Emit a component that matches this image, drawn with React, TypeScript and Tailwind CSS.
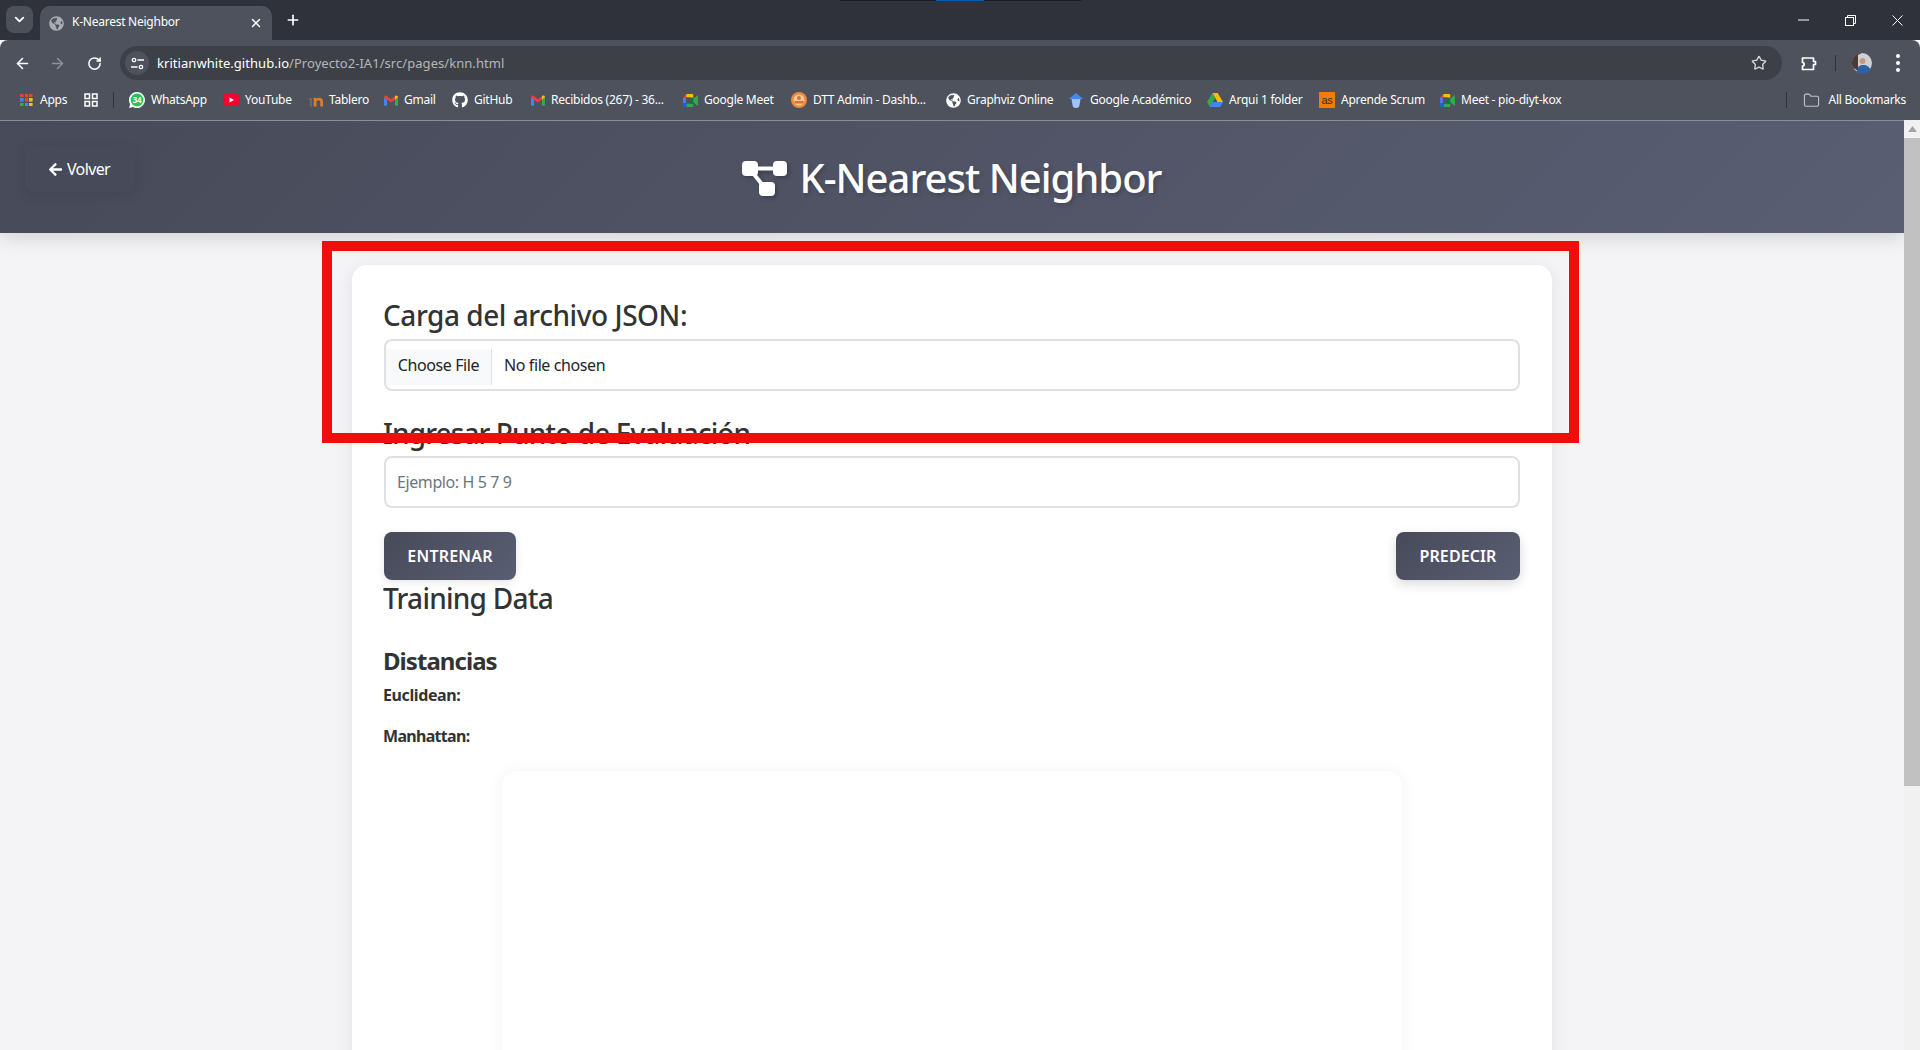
import { ArrowLeft, ArrowRight, ChevronDown, Folder, Plus, RotateCw, Star, X } from "lucide-react";
import { FaArrowLeft, FaGithub, FaGlobeAmericas } from "react-icons/fa";
import type { ReactNode } from "react";

const UI_FONT = "font-['Noto_Sans','Open_Sans',sans-serif]";

function AppsIcon() {
  const colors = ["#ea4335", "#ea4335", "#ea4335", "#4285f4", "#ea4335", "#fbbc04", "#34a853", "#4285f4", "#fbbc04"];
  return (
    <div className="grid grid-cols-3 gap-[1px] w-[13px] h-[13px]">
      {colors.map((c, i) => (
        <svg key={i} viewBox="0 0 3 3" className="w-[3.6px] h-[3.6px]">
          <rect width="3" height="3" fill={c} />
        </svg>
      ))}
    </div>
  );
}

function GridIcon() {
  return (
    <svg viewBox="0 0 14 14" className="w-[14px] h-[14px]" fill="none" stroke="#fff" strokeWidth="1.5">
      <rect x="1" y="1" width="4.5" height="4.5" />
      <rect x="8.5" y="1" width="4.5" height="4.5" />
      <rect x="1" y="8.5" width="4.5" height="4.5" />
      <rect x="8.5" y="8.5" width="4.5" height="4.5" />
    </svg>
  );
}

function WhatsAppIcon() {
  return (
    <div className="relative w-4 h-4">
      <svg viewBox="0 0 16 16" className="w-4 h-4">
        <path d="M8 0a8 8 0 0 0-6.8 12.2L0 16l3.9-1.1A8 8 0 1 0 8 0z" fill="#fff" />
        <circle cx="8" cy="8" r="6.4" fill="#25c35a" />
      </svg>
      <span className="absolute inset-0 flex items-center justify-center text-[8px] leading-none font-bold text-white">34</span>
    </div>
  );
}

function YouTubeIcon() {
  return (
    <svg viewBox="0 0 16 12" className="w-4 h-3">
      <rect width="16" height="12" rx="3" fill="#f8002f" />
      <path d="M6.5 3.5v5L11 6z" fill="#fff" />
    </svg>
  );
}

function TableroIcon() {
  return (
    <svg viewBox="0 0 15 13" className="w-[14px] h-[13px]">
      <path d="M0 4h3.500v2H3v7H1V6H0z" fill="#7a6a58" />
      <path d="M5 13V3.500h2.600v1.200C9.500 2.700 15 3 15 7.500V13h-3V8c0-2-4-2-4 0v5z" fill="#e07b28" />
    </svg>
  );
}

function GmailIcon() {
  return (
    <svg viewBox="0 0 16 12" className="w-[14px] h-[11px]">
      <path d="M0 2v9a1 1 0 0 0 1 1h2.500V5z" fill="#4285f4" />
      <path d="M16 2v9a1 1 0 0 1-1 1h-2.500V5z" fill="#34a853" />
      <path d="M0 2 3.500 5 8 8.400V4.500L3 .6C1.700-.4 0 .4 0 2z" fill="#ea4335" />
      <path d="M8 4.500v3.900L12.500 5V1z" fill="#ea4335" />
      <path d="M12.500 1v4L16 2.300C16 .4 14.300-.4 13 .6z" fill="#fbbc04" />
    </svg>
  );
}

function MeetIcon() {
  return (
    <svg viewBox="0 0 16 14" className="w-[15px] h-[13px]">
      <path d="M4 0h6a1 1 0 0 1 1 1v3H8V3.500H3V1z" fill="#fbbc04" />
      <path d="M3.500 0v4H0z" fill="#ea4335" />
      <path d="M0 4h3v6H0z" fill="#4285f4" />
      <path d="M0 10h3v1h1v3H2a2 2 0 0 1-2-2z" fill="#1967d2" />
      <path d="M4 10.500h7V13a1 1 0 0 1-1 1H4z" fill="#34a853" />
      <path d="M8 4h3v6.500H8z" fill="#00832d" />
      <path d="M11 5l5-4v12l-5-4z" fill="#34a853" />
    </svg>
  );
}

function DttIcon() {
  return (
    <svg viewBox="0 0 16 16" className="w-4 h-4">
      <circle cx="8" cy="8" r="8" fill="#ee8a3a" />
      <circle cx="8" cy="8" r="5.500" fill="#f7c9a0" />
      <circle cx="8" cy="6" r="2" fill="#d9752a" />
      <rect x="3.500" y="9" width="9" height="2.500" fill="#d9752a" />
    </svg>
  );
}

function ScholarIcon() {
  return (
    <svg viewBox="0 0 16 16" className="w-4 h-4">
      <path d="M8 1 0.500 7h15z" fill="#4285f4" />
      <path d="M3.500 7h9L11.500 13a3.500 3 0 0 1-7 0z" fill="#a0c3ff" />
    </svg>
  );
}

function DriveIcon() {
  return (
    <svg viewBox="0 0 16 14" className="w-4 h-[14px]">
      <path d="M5.300 0h5.400l5.300 9h-5.400z" fill="#fbbc04" />
      <path d="M5.300 0 0 9l2.700 5 5.300-9z" fill="#34a853" />
      <path d="M2.700 14 5.300 9H16l-2.700 5z" fill="#4285f4" />
    </svg>
  );
}

function AsIcon() {
  return (
    <div className="w-4 h-4 bg-[#f57c00] flex items-center justify-center text-[11px] leading-none text-[#3a2a18] font-['Liberation_Sans',sans-serif]">
      as
    </div>
  );
}

function DiagramIcon() {
  return (
    <svg viewBox="0 0 45 35" className="w-[45px] h-[35px] drop-shadow-[2px_2px_2px_rgba(0,0,0,0.25)]" fill="#fff">
      <rect x="0" y="0" width="16" height="15" rx="4" />
      <rect x="31" y="0" width="14" height="15" rx="4" />
      <rect x="17" y="21" width="16" height="14" rx="4" />
      <path d="M15 5.500h17v4H15z" />
      <path d="M8.500 12l3.500-2 11 14-3.500 2z" />
    </svg>
  );
}

function Avatar() {
  return (
    <svg viewBox="0 0 20 20" className="w-5 h-5">
      <circle cx="10" cy="10" r="10" fill="#cfd1d5" />
      <path d="M10 0a10 10 0 0 0-9 14.500L6 18V2z" fill="#4b3a38" />
      <circle cx="10.500" cy="8" r="3" fill="#c79a80" />
      <path d="M5 20c0-6 2-8 6-8s7 2 7 5a10 10 0 0 1-13 3z" fill="#2b62a8" />
    </svg>
  );
}

const BOOKMARKS: { icon: ReactNode; label: string; box: string; text: string }[] = [
  { icon: <YouTubeIcon />, label: "YouTube", box: "w-4", text: "w-[47px]" },
  { icon: <TableroIcon />, label: "Tablero", box: "w-[14px]", text: "w-[38px]" },
  { icon: <GmailIcon />, label: "Gmail", box: "w-[14px]", text: "w-[31px]" },
  { icon: <FaGithub className="text-white text-base" />, label: "GitHub", box: "w-4", text: "w-[40px]" },
  { icon: <GmailIcon />, label: "Recibidos (267) - 36...", box: "w-[14px]", text: "w-[115px]" },
  { icon: <MeetIcon />, label: "Google Meet", box: "w-[15px]", text: "w-[70px]" },
  { icon: <DttIcon />, label: "DTT Admin - Dashb...", box: "w-4", text: "w-[115px]" },
  { icon: <FaGlobeAmericas className="text-white text-[15px]" />, label: "Graphviz Online", box: "w-4", text: "w-[84px]" },
  { icon: <ScholarIcon />, label: "Google Académico", box: "w-4", text: "w-[100px]" },
  { icon: <DriveIcon />, label: "Arqui 1 folder", box: "w-4", text: "w-[73px]" },
  { icon: <AsIcon />, label: "Aprende Scrum", box: "w-4", text: "w-[82px]" },
  { icon: <MeetIcon />, label: "Meet - pio-diyt-kox", box: "w-[15px]", text: "w-[105px]" },
];

function BrowserChrome() {
  return (
    <div className={`shrink-0 ${UI_FONT}`}>
      {/* tabs */}
      <div className="relative h-10 bg-[#2f323b] flex items-end pl-[6px]">
        <div className="mb-[7px] w-[27px] h-[27px] rounded-lg bg-[#4b5059] flex items-center justify-center">
          <ChevronDown size={15} strokeWidth={3} className="text-white" />
        </div>
        <div className="ml-[7px] w-[232px] h-[34px] rounded-t-[10px] bg-[#4d525c] flex items-center pl-[9px] pr-[9px]">
          <FaGlobeAmericas className="text-[#a9adb5] text-[15px] shrink-0" />
          <span className="ml-[8px] mb-[2px] flex-1 text-[12px] tracking-[-0.25px] text-white whitespace-nowrap">K-Nearest Neighbor</span>
          <X size={14} strokeWidth={2.5} className="text-white" />
        </div>
        <Plus size={16} strokeWidth={2.5} className="ml-[13px] mb-[12px] text-white" />
        <div className="flex-1" />
        <div className="flex items-center h-10 self-start -mr-px">
          <div className="w-[47px] flex justify-center">
            <svg width="11" height="2" viewBox="0 0 11 2">
              <path d="M0 1h11" stroke="#fff" strokeWidth="1" />
            </svg>
          </div>
          <div className="w-[47px] flex justify-center">
            <svg width="11" height="11" viewBox="0 0 11 11" fill="none" stroke="#fff">
              <rect x="0.500" y="2.500" width="8" height="8" />
              <path d="M2.500 2.500V.5h8v8H8.500" />
            </svg>
          </div>
          <div className="w-[47px] flex justify-center">
            <svg width="11" height="11" viewBox="0 0 11 11" fill="none" stroke="#fff">
              <path d="M.5.500l10 10M10.500.5l-10 10" />
            </svg>
          </div>
        </div>
        <div className="absolute top-0 left-[840px] w-[241px] h-px bg-[#1c1d21]">
          <div className="ml-[96px] w-[48px] h-px bg-[#0b5cad]" />
        </div>
      </div>

      {/* address bar */}
      <div className="h-10 bg-[#4d525c] flex items-end rounded-t-lg">
        <div className="w-[120px] h-[34px] flex items-center pl-[14px] gap-[18px] text-white">
          <ArrowLeft size={17} strokeWidth={2.2} />
          <ArrowRight size={17} strokeWidth={2.2} className="text-[#8d9098]" />
          <RotateCw size={15} strokeWidth={2.4} className="ml-[3px]" />
        </div>
        <div className="w-[1662px] h-[34px] rounded-full bg-[#3d4047] flex items-center pl-[5px] pr-[15px]">
          <div className="w-6 h-6 rounded-full bg-[#4d525c] flex items-center justify-center">
            <svg width="13" height="13" viewBox="0 0 13 13" fill="none" stroke="#fff" strokeWidth="1.300">
              <circle cx="3" cy="3" r="1.700" />
              <path d="M6.500 3H13M0 10h6.500" />
              <circle cx="10" cy="10" r="1.700" />
            </svg>
          </div>
          <span className="ml-2 pt-px text-[13px] tracking-[0.05px] text-white whitespace-nowrap">
            kritianwhite.github.io<span className="text-[#b4b7bd]">/Proyecto2-IA1/src/pages/knn.html</span>
          </span>
          <div className="flex-1" />
          <Star size={16} strokeWidth={2} className="text-[#d5d7da]" />
        </div>
        <div className="flex-1 h-[34px] flex items-center pl-[19px] text-white">
          <svg width="16" height="16" viewBox="0 0 16 16" fill="none" stroke="#fff" strokeWidth="1.700">
            <path d="M1.500 3h11v3.500h2v3h-2V14.500h-11V11c2.200 0 2.200-3.500 0-3.500z" strokeLinejoin="round" />
          </svg>
          <div className="ml-[18px] w-px h-4 bg-[#2f323b]" />
          <div className="ml-[16px]">
            <Avatar />
          </div>
          <div className="ml-[24px] flex flex-col gap-[3px]">
            <div className="w-[4px] h-[4px] rounded-full bg-white" />
            <div className="w-[4px] h-[4px] rounded-full bg-white" />
            <div className="w-[4px] h-[4px] rounded-full bg-white" />
          </div>
        </div>
      </div>

      {/* bookmarks */}
      <div className="h-10 bg-[#4d525c] flex items-center pl-[20px] text-[12px] tracking-[-0.25px] text-white whitespace-nowrap">
        <AppsIcon />
        <span className="ml-[7px] w-[27px]">Apps</span>
        <div className="ml-[17px]">
          <GridIcon />
        </div>
        <div className="ml-[15px] w-px h-4 bg-[#2f323b]" />
        <div className="ml-[15px] flex items-center">
          <WhatsAppIcon />
          <span className="ml-[6px] w-[55px]">WhatsApp</span>
        </div>
        {BOOKMARKS.map((b) => (
          <div key={b.label} className="ml-[17px] flex items-center">
            <div className={`${b.box} flex justify-center`}>{b.icon}</div>
            <span className={`ml-[6px] ${b.text}`}>{b.label}</span>
          </div>
        ))}
        <div className="flex-1" />
        <div className="w-px h-4 bg-[#2f323b]" />
        <Folder size={17} strokeWidth={1.5} className="ml-[16px] text-[#c3c5ca]" />
        <span className="ml-[8px] mr-[14px]">All Bookmarks</span>
      </div>
    </div>
  );
}

function Header() {
  return (
    <header className="relative h-[113px] shrink-0 border-t border-[#8b8e96] bg-[linear-gradient(135deg,#474a58,#5a5e73)] shadow-[0_4px_20px_rgba(0,0,0,0.15)] flex items-center justify-center">
      <a className="absolute left-[25px] top-[25px] w-[110px] h-[46px] rounded-lg bg-[#474a58] shadow-[0_3px_12px_rgba(0,0,0,0.1)] flex items-center justify-center gap-[4px] pr-[2px] text-white text-[16px] tracking-[-0.6px]">
        <FaArrowLeft className="text-[15px]" />
        Volver
      </a>
      <h1 className="mt-[2px] flex items-center gap-[12px] text-white text-[40px] leading-none font-medium tracking-[-1px] [text-shadow:2px_2px_4px_rgba(0,0,0,0.2)]">
        <DiagramIcon />
        K-Nearest Neighbor
      </h1>
    </header>
  );
}

function Form() {
  const inputClasses =
    "block w-full h-[52px] rounded-lg border-2 border-[#e0e0e0] bg-white px-[11px] text-[16px] text-[#212529] tracking-[-0.4px] outline-none";
  return (
    <main className="w-[1200px] mx-auto mt-8 bg-white rounded-[15px] shadow-[0_4px_20px_rgba(0,0,0,0.08)] px-8 pt-[30px] pb-10">
      <h3 className="-ml-px text-[28px] leading-[40px] font-medium text-[#333] tracking-[-0.45px] mb-1">Carga del archivo JSON:</h3>
      <input
        type="file"
        className={`${inputClasses} py-2 pl-0 file:h-9 file:w-[106px] file:mr-3 file:pb-1 file:border-0 file:border-r file:border-solid file:border-[#dee2e6] file:bg-[#f8f9fa] file:text-[16px] file:tracking-[-0.4px] file:text-[#212529] file:font-normal`}
      />
      <h3 className="-ml-px mt-[22px] text-[28px] leading-[40px] font-medium text-[#333] tracking-[-0.9px]">Ingresar Punto de Evaluación</h3>
      <input type="text" placeholder="Ejemplo: H 5 7 9" className={`${inputClasses} mt-[3px] placeholder:text-[#6c757d]`} />
      <div className="mt-6 flex justify-between">
        <button className="w-[132px] h-12 rounded-lg bg-[linear-gradient(135deg,#474a58,#5a5e73)] text-white text-[16px] font-semibold tracking-[0.2px] shadow-[0_2px_8px_rgba(0,0,0,0.1)]">
          ENTRENAR
        </button>
        <button className="w-[124px] h-12 rounded-lg bg-[linear-gradient(135deg,#474a58,#5a5e73)] text-white text-[16px] font-semibold tracking-[0.1px] shadow-[0_4px_12px_rgba(0,0,0,0.15)]">
          PREDECIR
        </button>
      </div>
      <h3 className="-ml-px text-[28px] leading-[36px] font-medium text-[#333] tracking-[-0.75px]">Training Data</h3>
      <h4 className="-ml-px mt-[31px] text-[24px] leading-[28px] font-bold text-[#333] tracking-[-0.95px]">Distancias</h4>
      <p className="-ml-px mt-[8px] text-[16px] leading-6 font-bold text-[#333] tracking-[-0.4px]">Euclidean:</p>
      <p className="-ml-px mt-[17px] text-[16px] leading-6 font-bold text-[#333] tracking-[-0.7px]">Manhattan:</p>
      <div className="mx-auto mt-[23px] w-[900px] h-[600px] rounded-[15px] bg-white shadow-[0_0_15px_rgba(0,0,0,0.05)]" />
    </main>
  );
}

function Scrollbar() {
  return (
    <div className="w-4 shrink-0 bg-[#f1f1f1] flex flex-col items-center">
      <svg viewBox="0 0 9 6" className="mt-[6px] w-[9px] h-[6px]">
        <path d="M4.500 0 9 6H0z" fill="#a3a3a3" />
      </svg>
      <div className="mt-[6px] w-full h-[648px] bg-[#c1c1c1]" />
    </div>
  );
}

export default function App() {
  return (
    <div className={`relative w-[1920px] h-[1050px] overflow-hidden flex flex-col ${UI_FONT}`}>
      <BrowserChrome />
      <div className="flex-1 min-h-0 flex">
        <div className="flex-1 min-w-0 overflow-hidden bg-[#f4f4f7]">
          <Header />
          <Form />
        </div>
        <Scrollbar />
      </div>
      {/* red annotation frame drawn over the page */}
      <div className="absolute left-[322px] top-[241px] w-[1257px] h-[202px] border-[10px] border-[#f20d0d]" />
    </div>
  );
}
